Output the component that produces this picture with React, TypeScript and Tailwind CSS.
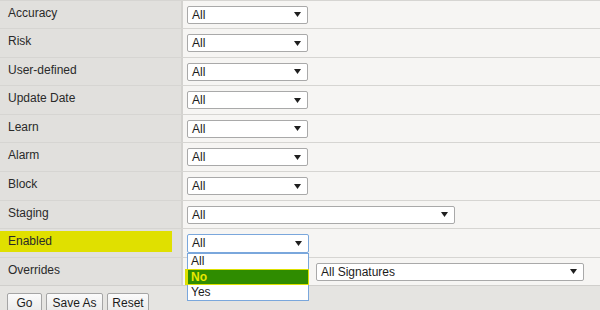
import React from 'react';

const font = "font-['Liberation_Sans',Arial,sans-serif]";

function Arrow() {
  return (
    <svg width="7" height="5" viewBox="0 0 7 5" className="shrink-0">
      <path d="M0 0 H7 L3.5 5 Z" fill="#1f1f1f" />
    </svg>
  );
}

function Select({ value, width, focused }: { value: string; width: string; focused?: boolean }) {
  return (
    <div
      className={`flex h-[18px] items-center justify-between rounded-[2px] border bg-white pl-[4px] pr-[6px] text-[12px] leading-none text-[#1b1b1b] ${width} ${
        focused ? 'border-[#7aa7dc]' : 'border-[#a9a9a9]'
      }`}
    >
      <span>{value}</span>
      <Arrow />
    </div>
  );
}

const rows = [
  { label: 'Accuracy', h: 'h-[28px]' },
  { label: 'Risk', h: 'h-[29px]' },
  { label: 'User-defined', h: 'h-[28px]' },
  { label: 'Update Date', h: 'h-[29px]' },
  { label: 'Learn', h: 'h-[28px]' },
  { label: 'Alarm', h: 'h-[29px]' },
  { label: 'Block', h: 'h-[29px]' },
];

export default function App() {
  return (
    <div className={`w-[600px] h-[310px] overflow-hidden bg-[#e5e4e1] ${font}`}>
      {rows.map((r) => (
        <div key={r.label} className={`flex ${r.h} border-t border-[#d6d5d2]`}>
          <div className="w-[183px] shrink-0 border-r-2 border-[#d3d2cf] bg-[#e1e0dd]">
            <div className="mt-[2px] h-[21px] pl-[8px] text-[12px] leading-[21px] text-[#2a2a2a]">{r.label}</div>
          </div>
          <div className="flex flex-1 items-center bg-[#f6f5f3] pl-[4px]">
            <Select value="All" width="w-[121px]" />
          </div>
        </div>
      ))}

      {/* Staging */}
      <div className="flex h-[28px] border-t border-[#d6d5d2]">
        <div className="w-[183px] shrink-0 border-r-2 border-[#d3d2cf] bg-[#e1e0dd]">
          <div className="mt-[2px] h-[21px] pl-[8px] text-[12px] leading-[21px] text-[#2a2a2a]">Staging</div>
        </div>
        <div className="flex flex-1 items-center bg-[#f6f5f3] pl-[4px]">
          <Select value="All" width="w-[268px]" />
        </div>
      </div>

      {/* Enabled, open dropdown */}
      <div className="relative z-10 flex h-[29px] border-t border-[#d6d5d2]">
        <div className="w-[183px] shrink-0 border-r-2 border-[#d3d2cf] bg-[#e1e0dd]">
          <div className="mt-[2px] h-[21px] w-[172px] bg-[#e0e000] pl-[8px] text-[12px] leading-[21px] text-[#2a2a2a]">
            Enabled
          </div>
        </div>
        <div className="flex flex-1 items-center bg-[#f6f5f3] pl-[4px]">
          <div className="relative">
            <div className="flex h-[19px] w-[122px] items-center justify-between rounded-[2px] border border-[#7aa7dc] bg-white pl-[4px] pr-[6px] text-[12px] leading-none text-[#1b1b1b]">
              <span>All</span>
              <Arrow />
            </div>
            <div className="absolute left-0 top-[19px] w-[122px] border border-[#7aa7dc] bg-white text-[12px] text-[#1b1b1b]">
              <div className="h-[15px] pl-[3px] leading-[15px]">All</div>
              <div className="-ml-[3px] -mr-[1px] h-[16px] border border-l-[3px] border-[#dde000] bg-[#2f8c00] pl-[3px] font-bold leading-[14px] text-[#e8e800]">
                No
              </div>
              <div className="h-[15px] pl-[3px] leading-[15px]">Yes</div>
            </div>
          </div>
        </div>
      </div>

      {/* Overrides */}
      <div className="flex h-[28px] border-t border-[#d6d5d2]">
        <div className="w-[183px] shrink-0 border-r-2 border-[#d3d2cf] bg-[#e1e0dd]">
          <div className="mt-[2px] h-[21px] pl-[8px] text-[12px] leading-[21px] text-[#2a2a2a]">Overrides</div>
        </div>
        <div className="flex flex-1 items-center gap-[8px] bg-[#f6f5f3] pl-[4px]">
          {/* first select sits under the open list */}
          <div className="invisible">
            <Select value="All" width="w-[121px]" />
          </div>
          <Select value="All Signatures" width="w-[268px]" />
        </div>
      </div>

      {/* Buttons */}
      <div className="flex gap-[4px] border-t border-[#d0cfcc] pl-[7px] pt-[7px]">
        {[
          { t: 'Go', w: 'w-[35px]' },
          { t: 'Save As', w: 'w-[57px]' },
          { t: 'Reset', w: 'w-[42px]' },
        ].map((b) => (
          <button
            key={b.t}
            className={`h-[21px] ${b.w} rounded-[2px] border border-[#a5a5a5] bg-gradient-to-b from-[#fbfbfb] to-[#e9e9e9] text-center text-[12px] leading-[19px] text-[#1b1b1b]`}
          >
            {b.t}
          </button>
        ))}
      </div>
    </div>
  );
}
